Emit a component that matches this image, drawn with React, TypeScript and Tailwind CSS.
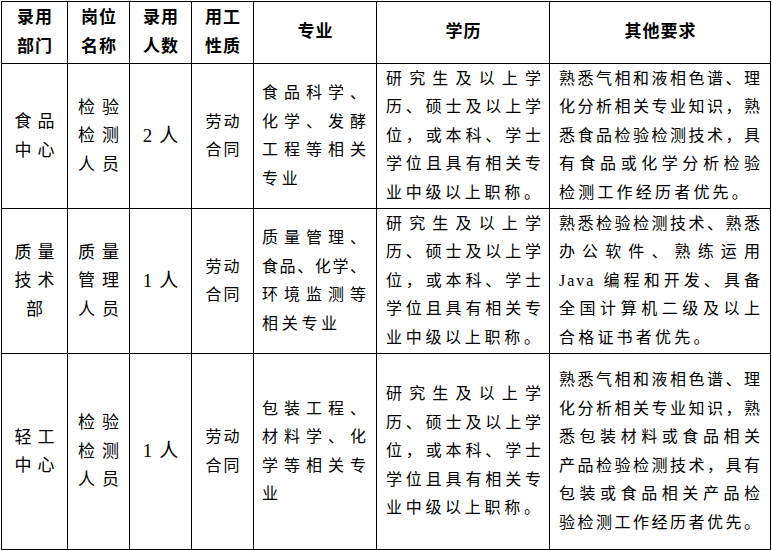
const FONT = '"Liberation Serif", "Noto Sans CJK SC", serif';

interface Row {
  height: string;
  dept: string[];
  post: string[];
  num: string;
  major: string[];
  other: string[];
  otherJustifyLast?: boolean;
}

const EDU = ["研究生及以上学", "历、硕士及以上学", "位，或本科、学士", "学位且具有相关专", "业中级以上职称。"];

const ROWS: Row[] = [
  {
    height: "h-[145px]",
    dept: ["食品", "中心"],
    post: ["检验", "检测", "人员"],
    num: "2",
    major: ["食品科学、", "化学、发酵", "工程等相关", "专业"],
    other: ["熟悉气相和液相色谱、理", "化分析相关专业知识，熟", "悉食品检验检测技术，具", "有食品或化学分析检验", "检测工作经历者优先。"],
  },
  {
    height: "h-[145px]",
    dept: ["质量", "技术", "部"],
    post: ["质量", "管理", "人员"],
    num: "1",
    major: ["质量管理、", "食品、化学、", "环境监测等", "相关专业"],
    other: ["熟悉检验检测技术、熟悉", "办公软件、熟练运用", "Java 编程和开发、具备", "全国计算机二级及以上", "合格证书者优先。"],
  },
  {
    height: "h-[196px]",
    dept: ["轻工", "中心"],
    post: ["检验", "检测", "人员"],
    num: "1",
    major: ["包装工程、", "材料学、化", "学等相关专", "业"],
    other: ["熟悉气相和液相色谱、理", "化分析相关专业知识，熟", "悉包装材料或食品相关", "产品检验检测技术，具有", "包装或食品相关产品检", "验检测工作经历者优先。"],
    otherJustifyLast: true,
  },
];

const HEADERS = [["录用", "部门"], ["岗位", "名称"], ["录用", "人数"], ["用工", "性质"], ["专业"], ["学历"], ["其他要求"]];

const cell = "border-r border-b border-black flex";

// centred column: each line is its own row of characters with a fixed gap
const Spread = ({ lines, gap }: { lines: string[]; gap: string }) => (
  <div className="flex flex-col items-center">
    {lines.map((l, i) => (
      <div key={i} className={`flex ${gap} h-[28.5px] items-center`}>
        {l.split("").map((c, j) => (
          <span key={j}>{c}</span>
        ))}
      </div>
    ))}
  </div>
);

// left column text: every line justified, last line just tracked
const Para = ({ lines, lastTrack, justifyLast }: { lines: string[]; lastTrack: string; justifyLast?: boolean }) => (
  <div className="w-full">
    {lines.map((l, i) => {
      const last = i === lines.length - 1 && !justifyLast;
      return (
        <div
          key={i}
          className={`h-[28.5px] leading-[28.5px] whitespace-nowrap ${
            last ? lastTrack : "text-justify [text-align-last:justify]"
          }`}
        >
          {l.startsWith("Java") ? (
            <>
              <span className="tracking-[2px]">Java</span>
              {l.slice(4)}
            </>
          ) : (
            l
          )}
        </div>
      );
    })}
  </div>
);

export default function App() {
  return (
    <div className="w-[772px] h-[550px] bg-white text-black text-[16px]" style={{ fontFamily: FONT }}>
      <div className="ml-[1px] mt-[1px] w-[770px] border-l border-t border-black grid grid-cols-[66px_62px_62px_62px_123px_173px_221px]">
        {HEADERS.map((h, i) => (
          <div key={i} className={`${cell} h-[62px] items-center justify-center`}>
            <div className="flex flex-col items-center font-bold text-[17px] tracking-[1px] pl-[1px]">
              {h.map((l) => (
                <div key={l} className="h-[28.5px] leading-[28.5px]">
                  {l}
                </div>
              ))}
            </div>
          </div>
        ))}
        {ROWS.map((r, ri) => (
          <div key={ri} className="contents">
            <div className={`${cell} ${r.height} items-center justify-center text-[17px]`}>
              <Spread lines={r.dept} gap="gap-[6px]" />
            </div>
            <div className={`${cell} ${r.height} items-center justify-center text-[17px]`}>
              <Spread lines={r.post} gap="gap-[7px]" />
            </div>
            <div className={`${cell} ${r.height} items-center justify-center`}>
              <div className="flex items-center gap-[7px] text-[19px]">
                <span>{r.num}</span>
                <span>人</span>
              </div>
            </div>
            <div className={`${cell} ${r.height} items-center justify-center`}>
              <Spread lines={["劳动", "合同"]} gap="gap-[2px]" />
            </div>
            <div className={`${cell} ${r.height} items-center pl-[8px] pr-[10px]`}>
              <Para lines={r.major} lastTrack="tracking-[3.7px]" />
            </div>
            <div className={`${cell} ${r.height} items-center pl-[9px] pr-[8px]`}>
              <Para lines={EDU} lastTrack="tracking-[3.7px]" />
            </div>
            <div className={`${cell} ${r.height} items-center pl-[9px] pr-[10px]`}>
              <Para lines={r.other} lastTrack="tracking-[3.2px]" justifyLast={r.otherJustifyLast} />
            </div>
          </div>
        ))}
      </div>
    </div>
  );
}
